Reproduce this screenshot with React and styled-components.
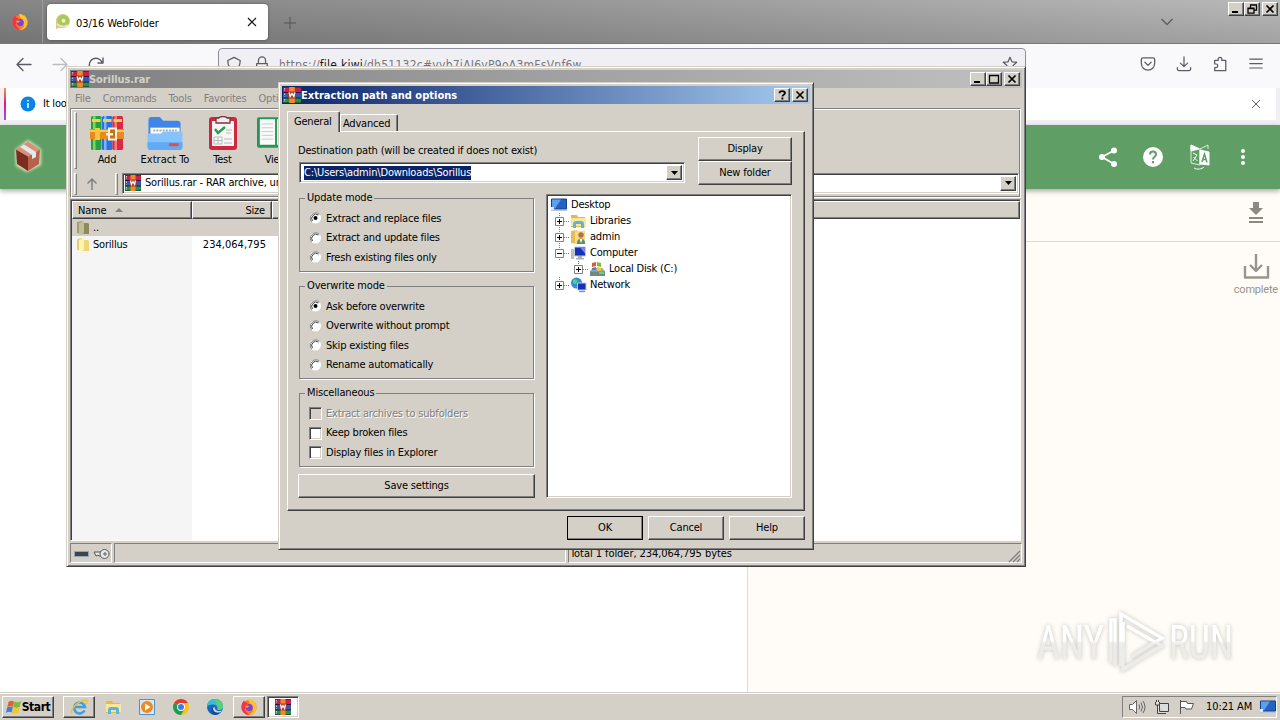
import React from "react"
import styled, { createGlobalStyle, css } from "styled-components"

const GlobalStyle = createGlobalStyle`
  * {
    box-sizing: border-box;
  }

  body {
    margin: 0;
    overflow: hidden;
  }

  svg {
    display: block;
    flex: none;
  }
`

const face = "#d4d0c8"

const raised = css`
  border: 1px solid;
  border-color: #fff #404040 #404040 #fff;
  box-shadow: inset -1px -1px 0 #808080;
`

const sunken = css`
  border: 1px solid;
  border-color: #808080 #fff #fff #808080;
  box-shadow: inset 1px 1px 0 #404040, inset -1px -1px 0 ${face};
`

const Desktop = styled.div`
  position: relative;
  display: flex;
  flex-direction: column;
  width: 1280px;
  height: 720px;
  overflow: hidden;
  background: #fff;
  color: #000;
  font: 11px/14px "DejaVu Sans Condensed", "DejaVu Sans", sans-serif;
  font-stretch: condensed;
  letter-spacing: -0.2px;
  white-space: nowrap;
`

const Text = styled.span`
  letter-spacing: ${p => p.$ls || "inherit"};
`

/* ---------- browser ---------- */

const Browser = styled.div`
  display: flex;
  flex-direction: column;
  height: 692px;
`

const TabStrip = styled.div`
  display: flex;
  align-items: flex-start;
  height: 44px;
  border-bottom: 1px solid #777;
  background: linear-gradient(180deg, rgba(255, 255, 255, 0.04), rgba(0, 0, 0, 0.11)),
    linear-gradient(90deg, #828282 0%, #8c8c8c 30%, #b6b6b6 100%);
`

const FirefoxSlot = styled.div`
  width: 43px;
  height: 43px;
  padding: 13px 0 0 11px;
  border-right: 1px solid #999;
`

const BrowserTab = styled.div`
  display: flex;
  align-items: center;
  width: 221px;
  height: 36px;
  margin: 4px 0 0 4px;
  padding: 0 11px 0 8px;
  border-radius: 4px;
  background: #fff;
  box-shadow: 0 0 3px rgba(0, 0, 0, 0.4);

  span {
    flex: 1;
    margin: 3px 0 0 5px;
  }
`

const NewTab = styled.div`
  padding: 17px 0 0 16px;
`

const TabsMenu = styled.div`
  margin: 17px 0 0 auto;
`

const CaptionButtons = styled.div`
  display: flex;
  margin: ${p => p.$margin || "0"};

  > :last-child {
    margin-left: 2px;
  }
`

const CaptionButton = styled.div`
  display: grid;
  place-items: center;
  width: 16px;
  height: 14px;
  background: ${face};
  ${raised}
`

const NavBar = styled.div`
  display: flex;
  height: 44px;
  background: #f9f9fb;
  padding-left: 15px;
`

const NavIcons = styled.div`
  display: flex;
  gap: 18px;
  width: 203px;
  padding-top: 11px;
`

const UrlBar = styled.div`
  display: flex;
  width: 808px;
  height: 32px;
  margin-top: 4px;
  padding: 7px 7px 0;
  border: 1px solid #8f8f9d;
  border-radius: 4px;
  background: #f0f0f4;
  color: #77777f;
  gap: 12px;

  span {
    flex: 1;
    margin-left: -3px;
    padding-top: 2px;
    font-size: 12px;
    letter-spacing: 0.26px;
  }

  b {
    font-weight: normal;
    color: #15141a;
  }
`

const NavTools = styled.div`
  display: flex;
  gap: 20px;
  margin: 12px 0 0 114px;
`

const Notice = styled.div`
  display: flex;
  height: 37px;
  background: #f0f0f4;
  padding: 0 4px 5px;
`

const NoticeBody = styled.div`
  display: flex;
  align-items: center;
  flex: 1;
  border-left: 2px solid;
  border-image: linear-gradient(#ff9640, #e31587 50%, #9059ff) 1;
  background: #fff;
  padding: 0 15px 0 14px;

  span {
    flex: 1;
    margin-left: 7px;
  }
`

const SiteHeader = styled.div`
  z-index: 1;
  display: flex;
  justify-content: space-between;
  height: 64px;
  padding: 12px 26px 0 14px;
  background: #5f9e64;
  box-shadow: 0 2px 5px rgba(0, 0, 0, 0.35);
`

const SiteTools = styled.div`
  display: flex;
  align-items: center;
  gap: 22px;
  height: 40px;
`

const Site = styled.div`
  display: flex;
  flex: 1;
`

const SiteMain = styled.div`
  width: 748px;
  border-right: 1px solid #dcdad6;
`

const SiteSide = styled.div`
  flex: 1;
  background: #fffcf7;
`

const SideRow = styled.div`
  display: flex;
  flex-direction: column;
  align-items: flex-end;
  height: ${p => p.$h}px;
  padding: ${p => p.$pad};
  border-bottom: ${p => (p.$line ? "1px solid #dcdad6" : "0")};
  color: #97938b;
  font: 11px/12px Roboto, sans-serif;
  letter-spacing: -0.2px;
`

const Watermark = styled.svg`
  position: absolute;
  left: 1030px;
  top: 602px;
  overflow: visible;
  filter: drop-shadow(0 0 2px rgba(110, 110, 105, 0.4));
`

/* ---------- windows ---------- */

const Window = styled.div`
  position: absolute;
  z-index: 2;
  left: ${p => p.$x}px;
  top: ${p => p.$y}px;
  width: ${p => p.$w}px;
  height: ${p => p.$h}px;
  display: flex;
  flex-direction: column;
  padding: 3px;
  background: ${face};
  border: 1px solid;
  border-color: ${face} #404040 #404040 ${face};
  box-shadow: inset 1px 1px 0 #fff, inset -1px -1px 0 #808080;
`

const TitleBar = styled.div`
  display: flex;
  align-items: center;
  flex: none;
  height: 18px;
  padding: 0 2px 0 1px;
  background: ${p =>
    p.$active
      ? "linear-gradient(90deg, #0a246a, #a6caf0)"
      : "linear-gradient(90deg, #808080, #c0c0c0)"};
  color: ${p => (p.$active ? "#fff" : face)};
  font-weight: bold;
  letter-spacing: ${p => p.$ls};

  > span {
    flex: 1;
    padding-top: 1px;
  }
`

const MenuBar = styled.div`
  display: flex;
  gap: 12px;
  height: 20px;
  padding: 4px 0 0 5px;
  color: #808080;
`

const Rebar = styled.div`
  height: 91px;
  margin-right: 1px;
  border: 1px solid #808080;
  border-color: #808080 #fff #fff #808080;
  box-shadow: inset 1px 1px 0 #fff, inset -1px -1px 0 #808080;
  padding: 3px 1px 0 3px;
`

const ToolBand = styled.div`
  display: flex;
  height: 61px;
`

const Grip = styled.div`
  flex: none;
  width: 3px;
  height: ${p => p.$h}px;
  border: 1px solid;
  border-color: #fff #808080 #808080 #fff;
`

const Tool = styled.div`
  display: flex;
  flex-direction: column;
  align-items: center;
  justify-content: space-between;
  width: ${p => p.$w}px;
  height: 55px;
  padding-top: 4px;
  overflow: hidden;
`

const AddressBand = styled.div`
  display: flex;
  gap: 4px;
`

const UpButton = styled.div`
  width: 30px;
  padding: 4px 0 0 4px;
`

const Combo = styled.div`
  display: flex;
  align-items: center;
  flex: 1;
  height: ${p => p.$h}px;
  padding: 2px 2px 2px ${p => p.$pl}px;
  background: #fff;
  ${sunken}

  > span {
    margin-left: 4px;
  }
`

const Drop = styled.div`
  display: grid;
  place-items: center;
  width: 16px;
  height: 100%;
  margin-left: auto;
  background: ${face};
  ${raised}
`

const FileList = styled.div`
  flex: none;
  height: 342px;
  margin: 1px 1px 0 0;
  padding: 1px 0 0 1px;
  background: #fff;
  ${sunken}
`

const Columns = styled.div`
  display: grid;
  grid-template-columns: 120px 80px 1fr;
`

const HeadCell = styled.div`
  display: flex;
  align-items: center;
  justify-content: ${p => (p.$right ? "flex-end" : "flex-start")};
  gap: 9px;
  height: 18px;
  padding: 1px 6px 0 5px;
  background: ${face};
  ${raised}
`

const FileArea = styled.div`
  height: 321px;
  background: linear-gradient(90deg, #f5f5f5 120px, #fff 120px);
`

const FileRow = styled.div`
  display: grid;
  grid-template-columns: 120px 74px 1fr;
  align-items: center;
  width: 500px;
  height: 17px;
  background: ${p => (p.$on ? face : "none")};

  > :nth-child(2) {
    text-align: right;
    letter-spacing: 0.02px;
  }
`

const FileName = styled.div`
  display: flex;
  align-items: center;
  gap: 3px;
  padding-left: 4px;
`

const StatusBar = styled.div`
  display: flex;
  gap: 2px;
  height: 20px;
  margin-top: 2px;
`

const StatusCell = styled.div`
  display: flex;
  align-items: center;
  gap: 4px;
  width: ${p => (p.$w ? `${p.$w}px` : "auto")};
  flex: ${p => (p.$w ? "none" : 1)};
  padding: 2px 0 0 ${p => (p.$w ? 3 : 1)}px;
  border: 1px solid;
  border-color: #808080 #fff #fff #808080;
  letter-spacing: -0.06px;

  > svg:last-child {
    margin-left: ${p => (p.$w ? "0" : "auto")};
  }
`

/* ---------- dialog ---------- */

const DialogTabs = styled.div`
  display: flex;
  align-items: flex-end;
  height: 27px;
  padding-left: 5px;
`

const DialogTab = styled.div`
  z-index: ${p => (p.$on ? 1 : 0)};
  width: ${p => (p.$on ? 53 : 58)}px;
  height: ${p => (p.$on ? 21 : 17)}px;
  margin-bottom: ${p => (p.$on ? -1 : 0)}px;
  padding: ${p => (p.$on ? "3px 0 0 6px" : "2px 0 0 2px")};
  background: ${face};
  border: 1px solid;
  border-color: #fff #404040 transparent #fff;
  border-bottom: 0;
  border-radius: 2px 2px 0 0;
  box-shadow: inset -1px 0 0 #808080;
`

const TabPage = styled.div`
  height: 380px;
  width: 518px;
  margin-left: 5px;
  padding: 5px 12px 0 10px;
  ${raised}
`

const DestRow = styled.div`
  display: flex;
  justify-content: space-between;
`

const Dest = styled.div`
  width: 387px;
  padding-top: 7px;
`

const DestCombo = styled.div`
  display: flex;
  margin: 4px 0 0 1px;
`

const Selected = styled.span`
  background: #0a246a;
  color: #fff;
  height: 14px;
  letter-spacing: -0.17px;
`

const ButtonStack = styled.div`
  display: flex;
  flex-direction: column;
`

const Button = styled.div`
  display: grid;
  place-items: center;
  width: ${p => p.$w}px;
  height: 24px;
  background: ${face};
  outline: ${p => (p.$default ? "1px solid #000" : "0")};
  outline-offset: -1px;
  ${raised}
`

const Panes = styled.div`
  display: flex;
  justify-content: space-between;
  margin-top: 6px;
`

const Options = styled.div`
  width: 237px;
`

const Group = styled.fieldset`
  min-width: 0;
  width: 235px;
  height: ${p => p.$h}px;
  margin: 0 0 7px 1px;
  padding: 4px 0 0 9px;
  border: 1px solid #808080;
  box-shadow: 1px 1px 0 #fff, inset 1px 1px 0 rgba(255, 255, 255, 0);

  legend {
    margin-left: -4px;
    padding: 0 2px;
    line-height: 14px;
    letter-spacing: -0.15px;
  }
`

const Option = styled.div`
  display: flex;
  align-items: center;
  gap: 4px;
  height: 19.5px;
  color: ${p => (p.$off ? "#808080" : "#000")};
  text-shadow: ${p => (p.$off ? "1px 1px 0 #fff" : "none")};
`

const CheckBox = styled.div`
  width: 13px;
  height: 13px;
  background: ${p => (p.$off ? face : "#fff")};
  ${sunken}
`

const TreeBox = styled.div`
  width: 246px;
  height: 304px;
  margin-top: 3px;
  padding: 2px 4px;
  background: #fff;
  ${sunken}
`

const TreeRow = styled.div`
  display: flex;
  align-items: center;
  height: 16px;
  padding-left: ${p => p.$pl}px;

  > span {
    margin-left: ${p => (p.$pl ? 3 : 4)}px;
  }
`

const Twig = styled.svg`
  margin-right: 1px;
`

const Footer = styled.div`
  display: flex;
  justify-content: flex-end;
  gap: 5px;
  padding: 5px 5px 0 0;
`

/* ---------- taskbar ---------- */

const Taskbar = styled.div`
  display: flex;
  align-items: flex-start;
  height: 28px;
  padding: 4px 3px 0 2px;
  background: ${face};
  box-shadow: inset 0 1px 0 ${face}, inset 0 2px 0 #fff;
`

const TaskButton = styled.div`
  display: flex;
  align-items: center;
  justify-content: center;
  width: ${p => p.$w || 32}px;
  height: 22px;
  margin-left: ${p => p.$ml || 0}px;
  font: bold 12px/14px "DejaVu Sans Condensed", sans-serif;
  letter-spacing: -0.45px;
  ${p => p.$up && raised}
  ${p => p.$down && sunken}
  background: ${p => (p.$down ? "#fff" : "transparent")};
`

const Tray = styled.div`
  display: flex;
  align-items: center;
  gap: 8px;
  width: 155px;
  height: 22px;
  margin-left: auto;
  padding-left: 5px;
  border: 1px solid;
  border-color: #808080 #fff #fff #808080;

  > span {
    margin-left: 3px;
    letter-spacing: -0.1px;
  }
`

/* ---------- icons ---------- */

const Glyph = ({ kind }) => (
  <svg width="12" height="10" viewBox="0 0 12 10" fill="none" stroke="#000">
    {kind === "min" && <path d="M2 8h6" strokeWidth="2" />}
    {kind === "max" && <path d="M1.500 1v8h9V1M1 1.500h10" strokeWidth="1.300" />}
    {kind === "restore" && (
      <path d="M4.500 3.500V1.200h6v5H8M2 4.200h6v5H2zM4 1h7M2 4.500h6" strokeWidth="1.300" />
    )}
    {kind === "close" && <path d="M2.500 1.500l7 7M9.500 1.500l-7 7" strokeWidth="1.700" />}
    {kind === "help" && (
      <path d="M3.500 3.200C3.500.6 9 .6 9 3c0 1.700-2.600 1.700-2.600 3.400M6.400 7.600v1.800" strokeWidth="1.800" />
    )}
  </svg>
)

const Caption = ({ kinds, margin }) => (
  <CaptionButtons $margin={margin}>
    {kinds.map(k => (
      <CaptionButton key={k}>
        <Glyph kind={k} />
      </CaptionButton>
    ))}
  </CaptionButtons>
)

const Arrow = () => (
  <svg width="7" height="4" viewBox="0 0 7 4">
    <path d="M0 0h7L3.500 4z" />
  </svg>
)

const RarIcon = ({ width = 16 }) => (
  <svg width={width} height="16" viewBox="0 0 16 16" preserveAspectRatio="none">
    <path fill="#3b1030" d="M0 0h16v16H0z" />
    <path fill="#c81f4c" d="M0 .5h16v4.500H0z" />
    <path fill="#3454c4" d="M0 6h16v4.500H0z" />
    <path fill="#189848" d="M0 11.500h16v4H0z" />
    <path fill="#f08a24" d="M5.500 0h5v16h-5z" />
    <path fill="#a8362a" d="M4.500 4.500h7v7h-7z" />
    <path d="M5.500 5.500l.9 4L8 6.500l1.600 3 .9-4" stroke="#fff" strokeWidth="1.200" fill="none" />
    <path d="M1.500 1v3M1.500 6.500v3M1.500 12v3" stroke="#e8e4e4" strokeWidth=".8" strokeDasharray="1.500 1" />
  </svg>
)

const FirefoxIcon = () => (
  <svg width="18" height="18" viewBox="0 0 18 18">
    <circle cx="9" cy="9.500" r="7.600" fill="#ff7a1c" />
    <path d="M9 17.100A7.600 7.600 0 0 0 16.600 9c0-3-1.700-5-3.600-7-.2 1.600-1 2-2 2.500l2 9z" fill="#ffbd2e" />
    <path d="M1.400 9.500C1.500 6 2.500 4 4 2.500 4.300 4.200 6 4.500 7.500 5l-3 7 4.500 5A7.600 7.600 0 0 1 1.400 9.500z" fill="#f4334a" />
    <path d="M8 1.500C11 0 13 3 14.500 5.500l-4 1z" fill="#ffc52e" />
    <circle cx="9.300" cy="9.500" r="3.500" fill="#7542e5" />
    <path d="M4.500 8c2-1 3.500-.5 5 .5-1.500 0-1.500 1.500-2.500 1.500" fill="#ff9a2a" />
  </svg>
)

const KiwiIcon = () => (
  <svg width="16" height="16" viewBox="0 0 16 16">
    <path d="M1 15V8a7 7 0 1 1 7 6H4z" fill="#dcc58a" />
    <circle cx="8.500" cy="6.800" r="5.800" fill="#a9c857" />
    <circle cx="8.500" cy="6.800" r="2" fill="#eef2d2" />
    <path d="M2 10c3 3 8 3 11 1" stroke="#efe2b8" strokeWidth="2" fill="none" />
  </svg>
)

const Line = ({ size = 18, color = "#5b5b66", w = 1.4, children }) => (
  <svg
    width={size}
    height={size}
    viewBox="0 0 18 18"
    fill="none"
    stroke={color}
    strokeWidth={w}
    strokeLinecap="round"
    strokeLinejoin="round"
  >
    {children}
  </svg>
)

const BoxLogo = () => (
  <svg width="30" height="38" viewBox="0 0 30 38">
    <defs>
      <filter id="glow" x="-30%" y="-30%" width="160%" height="160%">
        <feGaussianBlur stdDeviation="1.600" />
      </filter>
    </defs>
    <path d="M1 13L14 3l13 9v16L13 35 2 29z" fill="#d8e8b8" filter="url(#glow)" />
    <path d="M2 12.500L14 4.500l12 8-12 7z" fill="#d98f7c" />
    <path d="M2 12.500l12 7V34L3 27z" fill="#7d2c20" />
    <path d="M26 12.500l-12 7V34l11-7z" fill="#b8614c" />
    <path d="M6 10l4-2.500 12 7.500v5l-4 2v-4z" fill="#dfe9ee" />
  </svg>
)

const AddIcon = () => (
  <svg width="34" height="34" viewBox="0 0 34 34">
    {[
      ["#25a043", "#8ad05a", 1],
      ["#2e6fe0", "#7db4ff", 12],
      ["#d82a48", "#ff7d70", 22.5],
    ].map(([a, b, x]) => (
      <g key={x}>
        <rect x={x} y="0" width="10.500" height="34" rx="1.500" fill={a} />
        <rect x={x + 2} y="0" width="2.500" height="34" fill={b} />
        <rect x={x + 1} y="3" width="8.500" height="3" fill="#f2d23c" />
      </g>
    ))}
    <path d="M0 13h34v10H0z" fill="#e98a1d" />
    <path d="M0 14h34v2H0z" fill="#ffc94a" />
    <path d="M5 12h5v12H5z" fill="#f9c440" />
    <path d="M19 12.500h7v11h-7z" fill="#c9701c" stroke="#fff3d8" strokeWidth="2" />
    <path d="M16 17h7v2.500h-7z" fill="#fff3d8" />
  </svg>
)

const ExtractIcon = () => (
  <svg width="38" height="35" viewBox="0 0 38 36">
    <path d="M2 30V4c0-2 1-3 3-3h8c2 0 3 4 5 4h14c2 0 3 1 3 3v22z" fill="#3f86e8" />
    <path d="M4 12h30v12H4z" fill="#fff" />
    <path d="M7 15h24" stroke="#9aa8c4" strokeWidth="2" strokeDasharray="2 1.200" />
    <path d="M1 20c0-1.500 1-2 2-2h11c2 0 2-2 4-2h17c1.500 0 2 1 2 2v14c0 2-1 3-3 3H4c-2 0-3-1-3-3z" fill="#86c3fc" />
    <path d="M1 27h36v4c0 2-1 4-3 4H4c-2 0-3-2-3-4z" fill="#5fabf6" />
    <path d="M23 28h10v3H23z" fill="#ee4b3a" />
  </svg>
)

const TestIcon = () => (
  <svg width="28" height="34" viewBox="0 0 28 34">
    <rect width="28" height="33" y="1" rx="3" fill="#cf2740" />
    <path d="M3 5h22v25H3z" fill="#f6f6f6" />
    <path d="M7 2h3c1-2 7-2 8 0h3v5H7z" fill="#eee" stroke="#7c3540" strokeWidth="1.300" />
    <path d="M6 13l3 4 7-6" stroke="#2d9b52" strokeWidth="2.400" fill="none" />
    <path d="M17 14h6M17 17h5M15 23h8M15 27h8" stroke="#b8b8b8" />
    <path d="M5 21h8v7H5zM9 21v7M5 24.500h8" fill="none" stroke="#bbb" />
  </svg>
)

const ViewIcon = () => (
  <svg width="38" height="33" viewBox="0 0 40 34">
    <rect y="1" width="40" height="32" rx="2" fill="#1f9a55" />
    <path d="M3 3h16v27H3zM21 3h16v27H21z" fill="#fafafa" />
    <path d="M5 8h12M5 12h12M5 16h12M5 20h12M5 24h12" stroke="#c4cccc" />
  </svg>
)

const FolderIcon = ({ dim }) => (
  <svg width="14" height="16" viewBox="0 0 14 16">
    <path d="M1 2l5-1v13l-5-1z" fill={dim ? "#a39c6c" : "#e9cf68"} />
    <path d="M5 3h7l1 1v10H5z" fill={dim ? "#8f895f" : "#f0d775"} />
    <path d="M3 3l5-2v12l-3 2-2-1z" fill={dim ? "#c4bf96" : "#fdf3b4"} />
  </svg>
)

const ScreenIcon = () => (
  <svg width="16" height="14" viewBox="0 0 16 14">
    <path d="M.5 1h15v10H.5z" fill="#2462c4" stroke="#18407e" />
    <path d="M1 1.500h9L4 10.500H1z" fill="#5ba0ee" />
    <path d="M0 12.500h16" stroke="#b8c4d0" />
    <path d="M0 9h3v3H0z" fill="#dfe8f4" />
  </svg>
)

const ExplorerIcon = () => (
  <svg width="17" height="16" viewBox="0 0 17 16">
    <path d="M1 2h6l1 2h7v10H1z" fill="#e3b94b" />
    <path d="M1 5h15v8H1z" fill="#fbe798" />
    <path d="M3 15v-4c0-2 1-3 3-3h5c2 0 3 1 3 3v4h-3v-4H6v4z" fill="#58b6e4" />
  </svg>
)

const UserIcon = () => (
  <svg width="17" height="16" viewBox="0 0 17 16">
    <path d="M1 2l6-1v14l-6-1z" fill="#e5bd52" />
    <path d="M5 2h10v13H5z" fill="#f6dc86" />
    <circle cx="11" cy="6" r="2.700" fill="#b86f3d" />
    <path d="M7 15c0-4 1.500-5.500 4-5.500s4 1.500 4 5.500z" fill="#5e8d6c" />
    <path d="M9.500 10h3L11 14z" fill="#fff" />
  </svg>
)

const ComputerIcon = () => (
  <svg width="17" height="16" viewBox="0 0 17 16">
    <path d="M1 4h3v10H1z" fill="#b8bec6" />
    <path d="M4.500 2h11v9h-11z" fill="#1730b8" stroke="#c3cbd8" />
    <path d="M10 2.500h5v6z" fill="#6e8bf0" />
    <path d="M8 11h4v2h2v1.500H6V13h2z" fill="#a9b0ba" />
  </svg>
)

const DiskIcon = () => (
  <svg width="17" height="16" viewBox="0 0 17 16">
    <path d="M1 10l3-3h9l3 3v4.500H1z" fill="#9fa7ac" />
    <path d="M1 10.500h15V15H1z" fill="#6d8a86" />
    <path d="M10 12h5" stroke="#5df07a" strokeWidth="1.500" />
    <path d="M3 2l4-1v4L3 6z" fill="#e9572b" />
    <path d="M8 1l4 1v4L8 5z" fill="#7dbb3c" />
    <path d="M3 7l4-1v3H3z" fill="#3f86d8" />
    <path d="M8 6l4 1v3H8z" fill="#f5c531" />
  </svg>
)

const NetworkIcon = () => (
  <svg width="17" height="16" viewBox="0 0 17 16">
    <circle cx="6.500" cy="6" r="5.500" fill="#2f8fd8" />
    <path d="M3 3c3-2 5 0 4 2s-3 3-4 1zM8 8l3-1-2 4z" fill="#5ccf6a" />
    <path d="M7.500 6h8.500v7H7.500z" fill="#1730b8" stroke="#c3cbd8" />
    <path d="M9 14.500h6" stroke="#8e98a6" strokeWidth="1.500" />
  </svg>
)

const WindowsFlag = () => (
  <svg width="16" height="16" viewBox="0 0 16 16">
    <path d="M2.500 3c2-1.500 3.500-1.500 5.500-.5L7 7.800C5 6.800 3.500 6.800 1.300 8.300z" fill="#e8602c" />
    <path d="M8.300 2.500c2 1 4.200 1 6.700-.6L13.800 7.700c-2.500 1.500-4.500 1.300-6.500.3z" fill="#7db93f" />
    <path d="M1 8.700c2-1.400 3.800-1.400 5.800-.5l-1.200 5.300C3.500 12.500 2 12.700 0 14z" fill="#3b7fd6" />
    <path d="M7.200 8.500c2 .9 3.900.9 6.400-.6l-1.200 5.700c-2 1.400-4.400 1.200-6.400.1z" fill="#f3c52f" />
  </svg>
)

const IeIcon = () => (
  <svg width="18" height="18" viewBox="0 0 18 18" fill="none">
    <path d="M14.500 12.500A5.500 5.500 0 1 1 15 9H5" stroke="#3aa0e4" strokeWidth="2.600" />
    <path d="M2 15.500C-.5 12 8 2 16.500 2c1 1 .3 3-1 4.500" stroke="#f2c230" strokeWidth="1.500" />
  </svg>
)

const MediaIcon = () => (
  <svg width="16" height="16" viewBox="0 0 16 16">
    <path d="M.5.5h15v15H.5z" fill="#d4e8f8" stroke="#4f93cf" />
    <circle cx="8" cy="8" r="6" fill="#f08a1c" />
    <path d="M6 4.500v7L11.500 8z" fill="#fff" />
  </svg>
)

const ChromeIcon = () => (
  <svg width="16" height="16" viewBox="0 0 16 16">
    <circle cx="8" cy="8" r="8" fill="#fbc116" />
    <path d="M8 8L1.100 4A8 8 0 0 1 14.900 4H8z" fill="#e33b2e" />
    <path d="M8 8L1.100 4A8 8 0 0 0 8 16l3.500-6z" fill="#1d9c4f" />
    <circle cx="8" cy="8" r="3.900" fill="#fff" />
    <circle cx="8" cy="8" r="3" fill="#3a7de8" />
  </svg>
)

const EdgeIcon = () => (
  <svg width="16" height="16" viewBox="0 0 16 16">
    <circle cx="8" cy="8" r="8" fill="#1568bd" />
    <path d="M0 8a8 8 0 0 1 16-.5c0 2.500-2 3.500-4 3.500-1.500 0-2-.8-1.500-1.500C11 6 4 3.500 0 8z" fill="#35bfd0" />
    <path d="M8 0a8 8 0 0 1 8 7.500c0 2.500-2 3.500-4 3.500-1.500 0-2-.8-1.500-1.500C11 6 9 4 8 0z" fill="#5ad07a" />
    <path d="M6 9c0 4 4 5.500 8 4a8 8 0 0 1-6 3c-4-1-5-6-2-7z" fill="#124a9c" />
    <path d="M8 8c-1 3 3 5 6.500 3.500L14 13c-4 1.500-8 0-8-4z" fill="#d4d0c8" />
  </svg>
)

const Radio = ({ on }) => (
  <svg width="13" height="13" viewBox="0 0 13 13">
    <circle cx="6.500" cy="6" r="5.500" fill="#fff" />
    <path d="M2.700 9.800A5.400 5.400 0 0 1 10.300 2.200" fill="none" stroke="#808080" />
    <path d="M3.500 9A4.300 4.300 0 0 1 9.500 3" fill="none" stroke="#404040" />
    {on && <circle cx="6.500" cy="6" r="2" />}
  </svg>
)

const TreeTwig = ({ open, top = true, bottom = true }) => (
  <Twig width="14" height="16" viewBox="0 0 14 16" fill="none" stroke="#808080">
    {top && <path d="M4.500 0v4" strokeDasharray="1 1" />}
    {bottom && <path d="M4.500 12v4" strokeDasharray="1 1" />}
    <path d="M9 8.500h5" strokeDasharray="1 1" />
    <path d="M.5 4.500h8v8h-8z" fill="#fff" />
    <path d={open ? "M2 8.500h5" : "M2 8.500h5M4.500 6v5"} stroke="#000" />
  </Twig>
)

/* ---------- sections ---------- */

const BrowserView = () => (
  <Browser>
    <TabStrip>
      <FirefoxSlot>
        <FirefoxIcon />
      </FirefoxSlot>
      <BrowserTab>
        <KiwiIcon />
        <Text $ls="-0.07px">03/16 WebFolder</Text>
        <svg width="10" height="10" viewBox="0 0 10 10">
          <path d="M1 1l8 8M9 1l-8 8" stroke="#15141a" strokeWidth="1.200" />
        </svg>
      </BrowserTab>
      <NewTab>
        <svg width="12" height="12" viewBox="0 0 12 12">
          <path d="M6 0v12M0 6h12" stroke="#55555c" />
        </svg>
      </NewTab>
      <TabsMenu>
        <svg width="14" height="10" viewBox="0 0 14 10" fill="none">
          <path d="M1.500 2L7 7.500 12.500 2" stroke="#5b5b66" strokeWidth="1.300" />
        </svg>
      </TabsMenu>
      <Caption kinds={["min", "restore", "close"]} margin="2px 2px 0 54px" />
    </TabStrip>
    <NavBar>
      <NavIcons>
        <Line>
          <path d="M2 9.500h14M8 3.500l-6 6 6 6" />
        </Line>
        <Line color="#bcbcc2">
          <path d="M2 9.500h14M10 3.500l6 6-6 6" />
        </Line>
        <Line>
          <path d="M3 13A6.500 6.500 0 1 1 15 7M16 3v5h-5" />
        </Line>
      </NavIcons>
      <UrlBar>
        <Line size={16}>
          <path d="M9 1.500L16 5c0 6-2 9.500-7 11.500C4 14.500 2 11 2 5z" />
        </Line>
        <Line size={16}>
          <path d="M5 8V5a4 4 0 0 1 8 0v3M3 8.500h12v8H3z" />
        </Line>
        <span>
          https://<b>file.kiwi</b>/dh51132c#yyb7iAJ6vP9oA3mFsVnf6w
        </span>
        <Line size={16}>
          <path d="M9 1.500l2.200 5 5.300.5-4 3.600 1.200 5.400L9 13.200 4.300 16l1.200-5.400-4-3.600 5.300-.5z" />
        </Line>
      </UrlBar>
      <NavTools>
        <Line size={16}>
          <path d="M3.500 2h11c1 0 2 1 2 2v4.500a7.500 7.500 0 0 1-15 0V4c0-1 1-2 2-2zM5.500 7L9 10.500 12.500 7" />
        </Line>
        <Line size={16}>
          <path d="M9 1v11M5 8l4 4 4-4M1.500 13v1.500c0 1 1 2 2 2h11c1 0 2-1 2-2V13" />
        </Line>
        <Line size={16}>
          <path d="M7 5V3.500a2 2 0 0 1 4 0V5h4.500v11.500H3V13h1.500a2 2 0 0 0 0-4H3V5z" />
        </Line>
        <Line size={16}>
          <path d="M2 3.500h14M2 8.500h14M2 13.500h14" />
        </Line>
      </NavTools>
    </NavBar>
    <Notice>
      <NoticeBody>
        <svg width="16" height="16" viewBox="0 0 16 16">
          <circle cx="8" cy="8" r="7.500" fill="#0a84e8" />
          <path d="M8 4v1.600M8 7v5" stroke="#fff" strokeWidth="1.500" />
        </svg>
        <span>It looks like you haven’t started Firefox in a while.</span>
        <svg width="10" height="10" viewBox="0 0 10 10">
          <path d="M1 1l8 8M9 1l-8 8" stroke="#5b5b66" />
        </svg>
      </NoticeBody>
    </Notice>
    <SiteHeader>
      <BoxLogo />
      <SiteTools>
        <svg width="20" height="20" viewBox="0 0 20 20" fill="#fff">
          <path d="M16 3.500L4 10l12 7" fill="none" stroke="#fff" strokeWidth="1.800" />
          <circle cx="16" cy="3.500" r="3" />
          <circle cx="4" cy="10" r="3" />
          <circle cx="16" cy="17" r="3" />
        </svg>
        <svg width="26" height="22" viewBox="0 0 26 22">
          <circle cx="13" cy="11" r="10" fill="#fff" />
          <path d="M10 8.500c0-4 6-4 6 0 0 2.300-3 2.200-3 5M13 15v2.200" fill="none" stroke="#5f9e64" strokeWidth="2" />
        </svg>
        <svg width="24" height="26" viewBox="0 0 24 26" fill="none" stroke="#fff">
          <path d="M3 1l9 4v16l-9-2zM12 5l8-4v4" strokeWidth="1" opacity=".8" />
          <path d="M3 1l8 4-8 2z" fill="#fff" />
          <path d="M12 6l9 2v13l-9-1z" fill="#fff" />
          <path d="M14 18l2.500-8 2.500 8.500M15 15.500h3" stroke="#5f9e64" strokeWidth="1.500" />
          <path d="M5 9l4 2-4 6M5.500 13l4 4M6 24c3 2 8 1 10-1" strokeWidth="1" />
        </svg>
        <svg width="20" height="18" viewBox="0 0 20 18" fill="#fff">
          <circle cx="9" cy="3" r="2" />
          <circle cx="9" cy="9" r="2" />
          <circle cx="9" cy="15" r="2" />
        </svg>
      </SiteTools>
    </SiteHeader>
    <Site>
      <SiteMain />
      <SiteSide>
        <SideRow $h={53} $pad="13px 16px 0 0" $line>
          <svg width="16" height="22" viewBox="0 0 16 22" fill="#8b8a82">
            <path d="M5 0h6v6h4l-7 7-7-7h4zM1 15h14v2H1zM1 19h14v2H1z" />
          </svg>
        </SideRow>
        <SideRow $h={120} $pad="11px 2px 0 0">
          <svg width="44" height="31" viewBox="0 0 44 31" fill="none" stroke="#97958e" strokeWidth="2.400">
            <path d="M22 1v17M16 12l6 6 6-6M11 13v11.500h23V13" strokeLinejoin="round" />
          </svg>
          complete
        </SideRow>
      </SiteSide>
    </Site>
  </Browser>
)

const AnyRunMark = () => (
  <Watermark width="210" height="80" viewBox="0 0 210 80">
    <defs>
      <linearGradient id="half" gradientUnits="userSpaceOnUse" x1="0" y1="0" x2="0" y2="80">
        <stop offset=".48" stopColor="#fff" />
        <stop offset=".52" stopColor="#eeece8" />
      </linearGradient>
    </defs>
    <g fill="url(#half)" fontFamily="Roboto, sans-serif" fontSize="48" fontWeight="400">
      <text x="7" y="57" textLength="67" lengthAdjust="spacingAndGlyphs">ANY</text>
      <text x="139" y="57" textLength="64" lengthAdjust="spacingAndGlyphs">RUN</text>
    </g>
    <g fill="none" stroke="url(#half)" strokeWidth="3.500">
      <path d="M91 64V12l41 24-31 19" />
      <path d="M81 61V18h4v46M91 69l38-24M97 24l35 20-39 23V20" />
    </g>
  </Watermark>
)

const WinRarWindow = () => (
  <Window $x={66} $y={66} $w={960} $h={501}>
    <TitleBar $ls="-0.08px">
      <RarIcon width={18} />
      <span>Sorillus.rar</span>
      <Caption kinds={["min", "max", "close"]} />
    </TitleBar>
    <MenuBar>
      <span>File</span>
      <Text $ls="-0.28px">Commands</Text>
      <span>Tools</span>
      <span>Favorites</span>
      <span>Options</span>
      <span>Help</span>
    </MenuBar>
    <Rebar>
      <ToolBand>
        <Grip $h={57} />
        <Tool $w={60}>
          <AddIcon />
          Add
        </Tool>
        <Tool $w={56}>
          <ExtractIcon />
          <Text $ls="0">Extract To</Text>
        </Tool>
        <Tool $w={59}>
          <TestIcon />
          Test
        </Tool>
        <Tool $w={48}>
          <ViewIcon />
          View
        </Tool>
      </ToolBand>
      <AddressBand>
        <Grip $h={22} />
        <UpButton>
          <svg width="14" height="14" viewBox="0 0 14 14" fill="none" stroke="#808080" strokeWidth="1.500">
            <path d="M7 13V2M2.500 6.500L7 2l4.500 4.500" />
          </svg>
        </UpButton>
        <Grip $h={22} />
        <Combo $h={21} $pl={2}>
          <RarIcon />
          <Text $ls="-0.16px">Sorillus.rar - RAR archive, unpacked size 234,064,795 bytes</Text>
          <Drop>
            <Arrow />
          </Drop>
        </Combo>
      </AddressBand>
    </Rebar>
    <FileList>
      <Columns>
        <HeadCell>
          Name
          <svg width="8" height="5" viewBox="0 0 8 5">
            <path d="M4 0l4 4H0z" fill="#808080" />
          </svg>
        </HeadCell>
        <HeadCell $right>Size</HeadCell>
        <HeadCell />
      </Columns>
      <FileArea>
        <FileRow $on>
          <FileName>
            <FolderIcon dim />
            <span>..</span>
          </FileName>
        </FileRow>
        <FileRow>
          <FileName>
            <FolderIcon />
            <span>Sorillus</span>
          </FileName>
          <span>234,064,795</span>
        </FileRow>
      </FileArea>
    </FileList>
    <StatusBar>
      <StatusCell $w={42}>
        <svg width="15" height="8" viewBox="0 0 15 8">
          <path d="M.5 1.500h14v5H.5z" fill="#3c464a" stroke="#93a6b4" />
        </svg>
        <svg width="17" height="12" viewBox="0 0 17 12" fill="#e8e8e8" stroke="#555">
          <path d="M1 4h8v4H6L5 7 3 8z" />
          <circle cx="11.500" cy="6" r="4.500" />
          <circle cx="12" cy="6" r="1.200" />
        </svg>
      </StatusCell>
      <StatusCell $w={452} />
      <StatusCell>
        <Text>Total 1 folder, 234,064,795 bytes</Text>
        <svg width="13" height="18" viewBox="0 0 13 18" stroke="#808080" strokeWidth="1.300">
          <path d="M1 17L12 6M5 17l7-7M9 17l3-3" />
        </svg>
      </StatusCell>
    </StatusBar>
  </Window>
)

const updateModes = ["Extract and replace files", "Extract and update files", "Fresh existing files only"]
const overwriteModes = [
  "Ask before overwrite",
  "Overwrite without prompt",
  "Skip existing files",
  "Rename automatically",
]
const misc = ["Extract archives to subfolders", "Keep broken files", "Display files in Explorer"]

const ExtractDialog = () => (
  <Window $x={278} $y={82} $w={536} $h={468}>
    <TitleBar $active $ls="0.02px">
      <RarIcon width={18} />
      <span>Extraction path and options</span>
      <Caption kinds={["help", "close"]} />
    </TitleBar>
    <DialogTabs>
      <DialogTab $on>General</DialogTab>
      <DialogTab>Advanced</DialogTab>
    </DialogTabs>
    <TabPage>
      <DestRow>
        <Dest>
          <Text $ls="-0.17px">Destination path (will be created if does not exist)</Text>
          <DestCombo>
            <Combo $h={21} $pl={0}>
              <Selected>C:\Users\admin\Downloads\Sorillus</Selected>
              <Drop>
                <Arrow />
              </Drop>
            </Combo>
          </DestCombo>
        </Dest>
        <ButtonStack>
          <Button $w={94}>Display</Button>
          <Button $w={94}>New folder</Button>
        </ButtonStack>
      </DestRow>
      <Panes>
        <Options>
          <Group $h={81}>
            <legend>Update mode</legend>
            {updateModes.map((label, i) => (
              <Option key={label}>
                <Radio on={i === 0} />
                {label}
              </Option>
            ))}
          </Group>
          <Group $h={100}>
            <legend>Overwrite mode</legend>
            {overwriteModes.map((label, i) => (
              <Option key={label}>
                <Radio on={i === 0} />
                {label}
              </Option>
            ))}
          </Group>
          <Group $h={81}>
            <legend>Miscellaneous</legend>
            {misc.map((label, i) => (
              <Option key={label} $off={i === 0}>
                <CheckBox $off={i === 0} />
                {label}
              </Option>
            ))}
          </Group>
          <Button $w={237}>Save settings</Button>
        </Options>
        <TreeBox>
          <TreeRow $pl={0}>
            <ScreenIcon />
            <span>Desktop</span>
          </TreeRow>
          <TreeRow $pl={4}>
            <TreeTwig />
            <ExplorerIcon />
            <span>Libraries</span>
          </TreeRow>
          <TreeRow $pl={4}>
            <TreeTwig />
            <UserIcon />
            <span>admin</span>
          </TreeRow>
          <TreeRow $pl={4}>
            <TreeTwig open />
            <ComputerIcon />
            <span>Computer</span>
          </TreeRow>
          <TreeRow $pl={23}>
            <TreeTwig bottom={false} />
            <DiskIcon />
            <span>Local Disk (C:)</span>
          </TreeRow>
          <TreeRow $pl={4}>
            <TreeTwig bottom={false} />
            <NetworkIcon />
            <span>Network</span>
          </TreeRow>
        </TreeBox>
      </Panes>
    </TabPage>
    <Footer>
      <Button $w={76} $default>OK</Button>
      <Button $w={76}>Cancel</Button>
      <Button $w={76}>Help</Button>
    </Footer>
  </Window>
)

const TaskbarView = () => (
  <Taskbar>
    <TaskButton $w={52} $up>
      <WindowsFlag />
      Start
    </TaskButton>
    <TaskButton $ml={9} $up>
      <IeIcon />
    </TaskButton>
    <TaskButton $ml={2}>
      <ExplorerIcon />
    </TaskButton>
    <TaskButton $ml={2}>
      <MediaIcon />
    </TaskButton>
    <TaskButton $ml={2}>
      <ChromeIcon />
    </TaskButton>
    <TaskButton $ml={2}>
      <EdgeIcon />
    </TaskButton>
    <TaskButton $ml={2} $up>
      <FirefoxIcon />
    </TaskButton>
    <TaskButton $ml={2} $down>
      <RarIcon />
    </TaskButton>
    <Tray>
      <svg width="18" height="16" viewBox="0 0 18 16" fill="#fff" stroke="#666">
        <path d="M1.500 5.500h3l4-4v13l-4-4h-3z" />
        <path d="M11 5.500q1.500 2.500 0 5M13 3.500q3 4.500 0 9M15 2q4 6 0 12" fill="none" />
      </svg>
      <svg width="16" height="16" viewBox="0 0 16 16" fill="#ddd" stroke="#444">
        <path d="M5.500 4.500h9v8h-9zM1.500 3v3h4V3M2.500 1v2M4.500 1v2M3.500 6v8.500H12" />
      </svg>
      <svg width="17" height="16" viewBox="0 0 17 16" fill="#fff" stroke="#555">
        <path d="M2.500 1v14M2.500 2.500h6l1 2h6l-2 5.500H8L7 8.500H2.500z" />
      </svg>
      <span>10:21 AM</span>
      <ScreenIcon />
    </Tray>
  </Taskbar>
)

const App = () => (
  <>
    <GlobalStyle />
    <Desktop>
      <BrowserView />
      <AnyRunMark />
      <WinRarWindow />
      <ExtractDialog />
      <TaskbarView />
    </Desktop>
  </>
)

export default App
